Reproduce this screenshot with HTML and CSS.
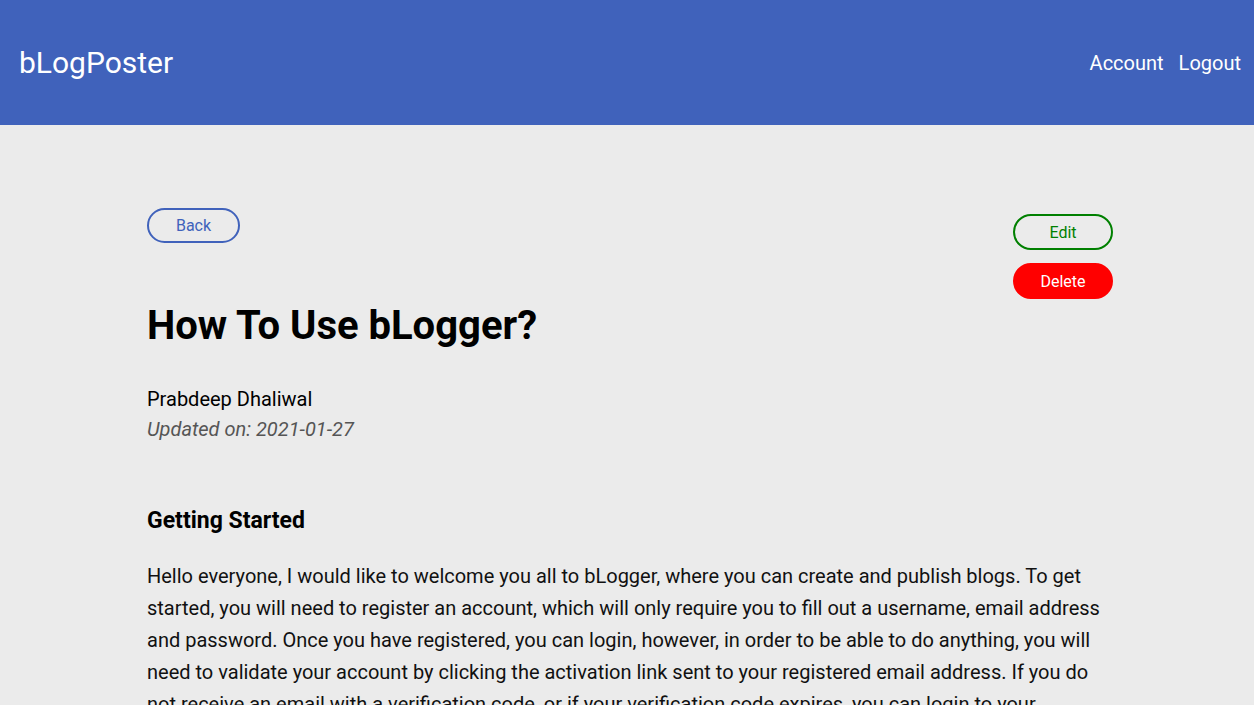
FILE: index.html
```html
<!DOCTYPE html>
<html lang="en">
<head>
<meta charset="utf-8">
<title>bLogPoster</title>
<link rel="stylesheet" href="styles.css">
</head>
<body>
<header class="topbar">
  <div class="brand">bLogPoster</div>
  <nav class="nav">
    <a href="#">Account</a>
    <a href="#">Logout</a>
  </nav>
</header>
<main class="post">
  <div class="post-actions">
    <button class="btn btn-back">Back</button>
    <div class="owner-actions">
      <button class="btn btn-edit">Edit</button>
      <button class="btn btn-delete">Delete</button>
    </div>
  </div>
  <h1 class="post-title">How To Use bLogger?</h1>
  <div class="meta">
    <div class="author">Prabdeep Dhaliwal</div>
    <div class="updated">Updated on: 2021-01-27</div>
  </div>
  <section class="post-body">
    <h3>Getting Started</h3>
    <p>Hello everyone, I would like to welcome you all to bLogger, where you can create and publish blogs. To get started, you will need to register an account, which will only require you to fill out a username, email address and password. Once you have registered, you can login, however, in order to be able to do anything, you will need to validate your account by clicking the activation link sent to your registered email address. If you do not receive an email with a verification code, or if your verification code expires, you can login to your account and request a new one.</p>
  </section>
</main>
</body>
</html>
```

FILE: styles.css
```css
* { box-sizing: border-box; }
html, body {
  margin: 0;
  padding: 0;
  background: #ebebeb;
  font-family: Roboto, "Liberation Sans", Arial, sans-serif;
  color: #000;
}
.topbar {
  height: 125px;
  background: #4062bb;
  display: flex;
  align-items: center;
  justify-content: space-between;
  padding: 0 13px 0 19px;
  color: #fff;
}
.brand {
  font-size: 30px;
  line-height: 1;
}
.nav {
  display: flex;
  gap: 15px;
}
.nav a {
  color: #fff;
  text-decoration: none;
  font-size: 20px;
}
.post {
  width: 966px;
  margin: 0 0 0 147px;
  padding-top: 83px;
}
.post-actions {
  display: flex;
  justify-content: space-between;
  align-items: flex-start;
}
.owner-actions {
  display: flex;
  flex-direction: column;
  gap: 13px;
  margin-top: 6px;
}
.btn {
  font-family: Roboto, "Liberation Sans", Arial, sans-serif;
  font-size: 16px;
  height: 36px;
  border-radius: 18px;
  background: transparent;
  padding: 0;
  cursor: pointer;
}
.btn-back {
  width: 93px;
  height: 35px;
  border: 2px solid #4062bb;
  color: #4062bb;
}
.btn-edit {
  width: 100px;
  border: 2px solid #008000;
  color: #008000;
}
.btn-delete {
  width: 100px;
  border: 2px solid #ff0000;
  background: #ff0000;
  color: #fff;
}
.post-title {
  font-size: 40px;
  font-weight: 700;
  margin: 4px 0 0;
  line-height: 1.172;
}
.meta {
  margin-top: 34px;
  font-size: 20px;
  line-height: 30px;
}
.updated {
  font-style: italic;
  color: #555;
}
.post-body {
  width: 960px;
}
.post-body h3 {
  font-size: 23px;
  font-weight: 700;
  margin: 62px 0 0;
  line-height: 30px;
}
.post-body p {
  font-size: 20px;
  line-height: 32px;
  margin: 24px 0 0;
  color: #111;
}
```
